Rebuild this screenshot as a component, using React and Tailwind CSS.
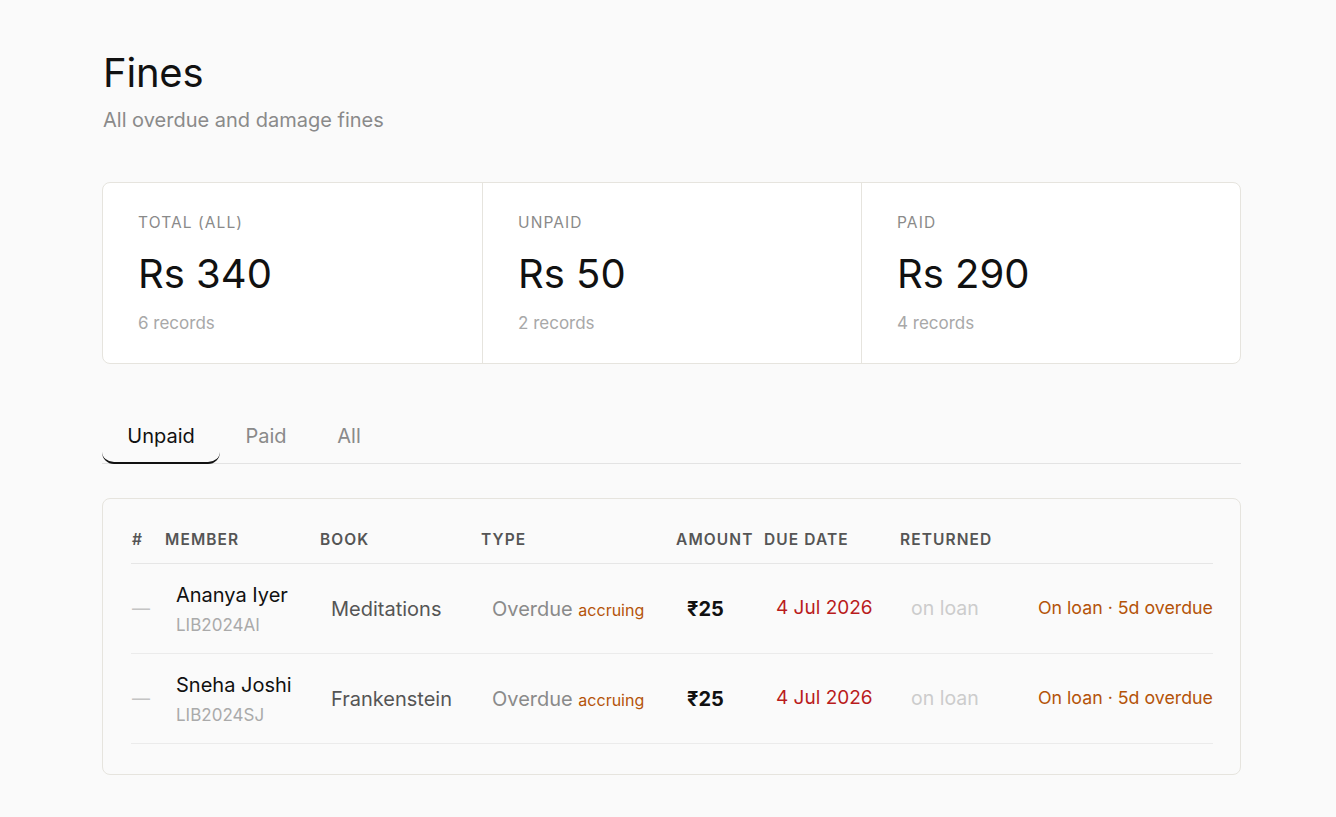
export default function App() {
  const stats = [
    { label: "TOTAL (ALL)", value: "Rs 340", sub: "6 records" },
    { label: "UNPAID", value: "Rs 50", sub: "2 records" },
    { label: "PAID", value: "Rs 290", sub: "4 records" },
  ];
  const rows = [
    { name: "Ananya Iyer", id: "LIB2024AI", book: "Meditations" },
    { name: "Sneha Joshi", id: "LIB2024SJ", book: "Frankenstein" },
  ];
  const cols = "grid grid-cols-[34px_155px_161px_195px_88px_136px_130px_1fr]";
  return (
    <div className="min-h-[817px] bg-[#fafafa] pl-[103px] pr-[95px] pt-[50px] text-[#111]" style={{ fontFamily: "Inter, 'Noto Sans', sans-serif" }}>
      <h1 className="text-[40px] leading-[46px] font-normal tracking-[-0.2px]">Fines</h1>
      <p className="mt-[12px] text-[20px] leading-[24px] text-[#8a8a8a]">All overdue and damage fines</p>

      <div className="mt-[50px] -ml-px grid grid-cols-3 rounded-lg border border-[#e6e4de] bg-white">
        {stats.map((s, i) => (
          <div key={s.label} className={`pl-[35px] pt-[30px] pb-[29px] ${i > 0 ? "border-l border-[#e6e4de]" : ""}`}>
            <div className="text-[15.5px] leading-[20px] tracking-[1.1px] text-[#8a8a8a]">{s.label}</div>
            <div className="mt-[17px] text-[40px] leading-[48px] text-[#111]">{s.value}</div>
            <div className="mt-[14px] text-[17px] leading-[22px] text-[#a8a8a8]">{s.sub}</div>
          </div>
        ))}
      </div>

      <div className="mt-[57px] -ml-px flex border-b border-[#e3e3e3] text-[20px] leading-[24px]">
        <div className="w-[118px] -mb-px rounded-b-xl border-b-2 border-[#111] pt-[3px] pb-[14px] text-center text-[#111]">Unpaid</div>
        <div className="w-[92px] pt-[3px] pb-[14px] text-center text-[#8a8a8a]">Paid</div>
        <div className="w-[74px] pt-[3px] pb-[14px] text-center text-[#8a8a8a]">All</div>
      </div>

      <div className="mt-[34px] -ml-px rounded-lg border border-[#e6e4de] bg-[#fafafa] pl-[28px] pr-[27px] pt-[30px] pb-[30px]">
        <div className={`${cols} border-b border-[#e6e6e6] pb-[12px] text-[15.5px] font-semibold leading-[22px] tracking-[1.1px] text-[#555]`}>
          <div className="pl-[1px]">#</div>
          <div>MEMBER</div>
          <div>BOOK</div>
          <div>TYPE</div>
          <div className="whitespace-nowrap">AMOUNT</div>
          <div className="whitespace-nowrap">DUE DATE</div>
          <div>RETURNED</div>
          <div></div>
        </div>
        {rows.map((r) => (
          <div key={r.id} className={`${cols} h-[90px] items-center border-b border-[#ebebeb]`}>
            <div className="pl-[1px] text-[18px] text-[#c4c4c4]">—</div>
            <div className="pl-[11px]">
              <div className="text-[20px] leading-[26px] text-[#111]">{r.name}</div>
              <div className="mt-[6px] text-[17px] leading-[22px] text-[#aaaaaa]">{r.id}</div>
            </div>
            <div className="pl-[11px] text-[20px] text-[#555]">{r.book}</div>
            <div className="pl-[11px] text-[20px] text-[#8a8a8a] whitespace-nowrap">
              Overdue <span className="text-[16px] text-[#b45309]">accruing</span>
            </div>
            <div className="pl-[11px] text-[20px] font-bold text-[#111]">₹25</div>
            <div className="pl-[12px] text-[19px] text-[#b91c1c] whitespace-nowrap">4 Jul 2026</div>
            <div className="pl-[11px] text-[19.5px] text-[#cccccc]">on loan</div>
            <div className="text-right text-[17.8px] text-[#b45309] whitespace-nowrap">On loan · 5d overdue</div>
          </div>
        ))}
      </div>
    </div>
  );
}
